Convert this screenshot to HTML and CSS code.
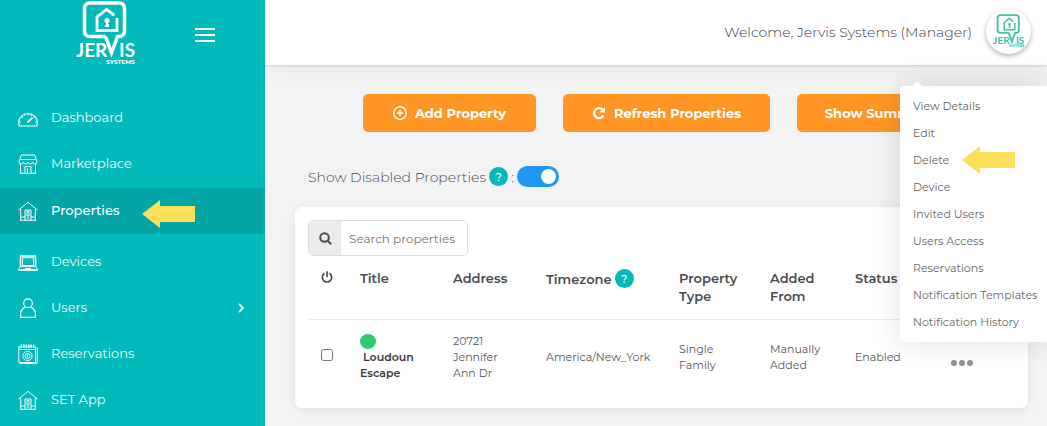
FILE: index.html
```html
<!DOCTYPE html>
<html lang="en">
<head>
<meta charset="utf-8">
<meta name="viewport" content="width=device-width, initial-scale=1">
<title>Properties</title>
<link rel="stylesheet" href="styles.css">
</head>
<body>
<svg class="defs" aria-hidden="true">
  <symbol id="logo-mark" viewBox="0 0 60 66">
    <path d="M29.500 35.500H14Q8.500 35.500 8.500 29.500V8Q8.500 2 14 2H43Q48.500 2 48.500 8V29.500Q48.500 35.500 43 35.500H41.500L35.500 52 29.500 35.500" fill="none" stroke="currentColor" stroke-width="3.500"/>
    <path d="M37 15V13L30.500 8.500 21 16V29.500H41V17" fill="none" stroke="currentColor" stroke-width="2.800"/>
    <circle cx="31" cy="19.500" r="2.500" fill="currentColor"/>
    <path d="M30 20h2v3h1v3h-4v-2h1z" fill="currentColor"/>
  </symbol>
  <symbol id="house" viewBox="0 0 20 20">
    <g fill="none" stroke="currentColor">
      <path d="M.5 9 10 1.300 19.500 9M2.700 8V19M17.300 8V19M2 19.300H18M2.500 16H7M13 16H17.500"/>
      <path d="M7 19V9H13V19M9 10.500H11V15H9ZM8.500 17H11.500"/>
    </g>
  </symbol>
</svg>
<div class="layout">
  <aside class="sidebar">
    <div class="brand">
      <a href="#" class="brand-link" aria-label="Jervis Systems"><svg class="brand-logo" viewBox="0 0 60 66"><use href="#logo-mark" width="60" height="66"/><text x="0" y="56" class="logo-word">JER</text><text x="43" y="56" class="logo-word">IS</text><text x="30" y="63" class="logo-sub">SYSTEMS</text></svg></a>
      <button class="burger" aria-label="Toggle menu"><span></span><span></span><span></span></button>
    </div>
    <nav class="nav">
      <a href="#" class="nav-item"><svg class="nav-icon" viewBox="0 0 20 20"><g fill="none" stroke="currentColor" stroke-width="1.200"><path d="M1.500 18H18.500Q19.400 16.500 19.400 14.500A9.400 9.000 0 0 0 .6 14.500Q.6 16.500 1.500 18ZM10 5.500V7.500M3.500 8.500 5 9.800M16.500 8.500 15.300 9.500M1 14H3M17 14H19M6.300 6.200 7 7.700M13.700 6.200 13 7.700"/><path d="M9.500 14.500 14.500 9.500" stroke-width="1.800"/></g></svg><span class="nav-label">Dashboard</span></a>
      <a href="#" class="nav-item"><svg class="nav-icon" viewBox="0 0 20 20"><g fill="none" stroke="currentColor"><path d="M3.500 1H16.500L19 7.500Q19 10 16.800 10 15 10 14.500 8 14 10 12.200 10 10.500 10 10 8 9.500 10 7.800 10 6 10 5.500 8 5 10 3.200 10 1 10 1 7.500ZM2.500 5.500H17.500M2.500 10V19M17.500 10V19M2 19.300H18M7 19V12.500H13V19M9.500 19V14.500"/></g></svg><span class="nav-label">Marketplace</span></a>
      <a href="#" class="nav-item nav-item-active" aria-current="page"><svg class="nav-icon"><use href="#house"/></svg><span class="nav-label">Properties</span><svg class="pointer nav-pointer" viewBox="0 0 53 28" aria-hidden="true"><path d="M0 14 18 0V6H53V22H18V28Z"/></svg></a>
      <a href="#" class="nav-item"><svg class="nav-icon" viewBox="0 0 20 20"><g fill="none" stroke="currentColor"><path d="M2.500 14.500V4H17.500V14.500" stroke-width="1.600"/><path d="M4.500 13V5.700H15.500V13.500H4.500M2.500 14.500 .6 17V18.500H19.400V17L17.500 14.500ZM7 16.500H13M.6 17.500H19"/></g></svg><span class="nav-label">Devices</span></a>
      <a href="#" class="nav-item"><svg class="nav-icon" viewBox="0 0 20 20"><g fill="none" stroke="currentColor" stroke-width="1.300"><circle cx="10" cy="5.200" r="4.400"/><path d="M7.500 9.200Q2.600 11 2.600 16.500V19.300H17.400V16.500Q17.400 11 12.500 9.200"/></g></svg><span class="nav-label">Users</span><svg class="chevron" viewBox="0 0 6 10"><path d="M1 1 5 5 1 9" fill="none" stroke="currentColor" stroke-width="1.800"/></svg></a>
      <a href="#" class="nav-item"><svg class="nav-icon" viewBox="0 0 20 20"><g fill="none" stroke="currentColor"><path d="M.8 3H17.500V18.500H.8ZM19.200 3.500V19.400H1.500M1 5.500H17.500"/><path d="M2.500 2H17.500" stroke-width="3" stroke-dasharray="1.500 1"/><circle cx="9.500" cy="12" r="4.600"/><circle cx="9.500" cy="12" r="2.500"/><path d="M9.500 10V13.500"/></g></svg><span class="nav-label">Reservations</span></a>
      <a href="#" class="nav-item"><svg class="nav-icon"><use href="#house"/></svg><span class="nav-label">SET App</span></a>
    </nav>
  </aside>
  <div class="page">
    <header class="topbar">
      <span class="welcome">Welcome, Jervis Systems (Manager)</span>
      <button class="avatar" aria-label="Account"><svg class="avatar-logo" viewBox="0 0 60 66"><use href="#logo-mark" width="60" height="66"/><text x="0" y="56" class="logo-word">JER</text><text x="43" y="56" class="logo-word">IS</text><text x="30" y="63" class="logo-sub">SYSTEMS</text></svg></button>
    </header>
    <main class="content">
      <div class="actions">
        <button class="btn btn-add"><svg class="btn-icon" viewBox="0 0 14 14"><g fill="none" stroke="currentColor" stroke-width="1.400"><circle cx="7" cy="7" r="6.200"/><path d="M7 4V10M4 7H10"/></g></svg>Add Property</button>
        <button class="btn btn-refresh"><svg class="btn-icon" viewBox="0 0 14 14"><path d="M11.300 4.500A5 5 0 1 0 11.500 9.500" fill="none" stroke="currentColor" stroke-width="2.200"/><path d="M13 1V6.500H7.500Z" fill="currentColor"/></svg>Refresh Properties</button>
        <button class="btn btn-summary">Show Summary</button>
      </div>
      <div class="filter">
        <label for="disabled">Show Disabled Properties</label>
        <button class="help" aria-label="Help">?</button>
        <span>:</span>
        <input class="switch" id="disabled" type="checkbox" role="switch" checked>
      </div>
      <section class="card">
        <div class="search">
          <label class="search-label" for="search" aria-label="Search"><svg class="search-icon" viewBox="0 0 13 13"><g fill="none" stroke="currentColor" stroke-width="2"><circle cx="5.500" cy="5.500" r="4.300"/><path d="M8.600 8.600 12.200 12.200"/></g></svg></label>
          <input class="search-input" id="search" type="text" placeholder="Search properties">
        </div>
        <table class="table">
          <colgroup><col class="col-check"><col class="col-text"><col class="col-text"><col class="col-zone"><col class="col-type"><col class="col-from"><col class="col-status"><col></colgroup>
          <thead>
            <tr>
              <th class="check-cell"><svg class="power" viewBox="0 0 12 12" role="img" aria-label="Power"><path d="M3.500 2.300A4.700 4.700 0 1 0 8.500 2.300M6 .3V6" fill="none" stroke="currentColor" stroke-width="1.700"/></svg></th>
              <th>Title</th><th>Address</th><th><span class="with-help">Timezone <button class="help" aria-label="Timezone help">?</button></span></th><th>Property Type</th><th>Added From</th><th>Status</th><th></th>
            </tr>
          </thead>
          <tbody>
            <tr>
              <td class="check-cell"><input class="row-check" type="checkbox" aria-label="Select Loudoun Escape"></td>
              <td class="title-cell"><span class="dot"></span>&nbsp;Loudoun Escape</td>
              <td>20721<br>Jennifer<br>Ann Dr</td>
              <td>America/New_York</td>
              <td>Single<br>Family</td>
              <td>Manually<br>Added</td>
              <td>Enabled</td>
              <td class="more-cell"><button class="more" aria-label="More actions"><span></span><span></span><span></span></button></td>
            </tr>
          </tbody>
        </table>
      </section>
    </main>
    <div class="menu">
      <a href="#">View Details</a>
      <a href="#">Edit</a>
      <a href="#">Delete<svg class="pointer menu-pointer" viewBox="0 0 53 28" aria-hidden="true"><path d="M0 14 18 0V6H53V22H18V28Z"/></svg></a>
      <a href="#">Device</a>
      <a href="#">Invited Users</a>
      <a href="#">Users Access</a>
      <a href="#">Reservations</a>
      <a href="#">Notification Templates</a>
      <a href="#">Notification History</a>
    </div>
  </div>
</div>
</body>
</html>
```

FILE: styles.css
```css
* { box-sizing: border-box; }
body {
  margin: 0;
  font-family: Montserrat, Inter, "Open Sans", sans-serif;
  font-size: 14px;
  color: #4a4b50;
  background: #f3f3f3;
}
a { color: inherit; text-decoration: none; }
button, input { font: inherit; color: inherit; }
button { border: 0; padding: 0; background: none; cursor: pointer; }
.defs { position: absolute; width: 0; height: 0; }

.layout { display: grid; grid-template-columns: 265px 1fr; min-height: 100vh; }

.sidebar { background: #02b9bb; color: #fff; }
.brand { display: flex; align-items: flex-start; height: 95px; padding: 1px 50px 0 76px; }
.brand-link { display: block; }
.brand-logo { display: block; width: 60px; height: 66px; overflow: visible; }
.burger { display: grid; gap: 4px; width: 20px; margin: 27px 0 0 auto; }
.burger span { height: 2px; background: #fff; }
.logo-word { font: 700 19px Lato, sans-serif; fill: currentColor; }
.logo-sub { font: 700 6px Montserrat, Lato, sans-serif; fill: currentColor; }

.nav-item {
  position: relative;
  display: flex;
  align-items: center;
  gap: 13px;
  height: 46px;
  padding: 0 21px 0 18px;
  color: #f0fbfb;
  font-size: 13px;
}
.nav-item-active { margin: 1px 0 5px; background: #04a5a7; color: #fff; font-weight: 500; }
.nav-icon { width: 20px; height: 20px; }
.nav-label { padding-bottom: 2px; }
.chevron { width: 6px; height: 10px; margin-left: auto; }
.pointer { position: absolute; width: 53px; height: 28px; fill: #ffde59; }
.nav-pointer { left: 142px; top: 12px; }

.page { position: relative; min-width: 0; overflow: hidden; }
.topbar {
  position: relative;
  display: flex;
  align-items: center;
  justify-content: flex-end;
  gap: 14px;
  height: 65px;
  padding: 0 16px 2px;
  background: #fff;
  box-shadow: 0 0 3px rgba(0, 0, 0, .25), 0 0 30px rgba(0, 0, 0, .05);
}
.welcome { font-size: 14px; font-weight: 300; color: #3a3b40; }
.avatar {
  display: grid;
  place-items: center;
  width: 45px;
  height: 45px;
  border-radius: 50%;
  background: #fff;
  color: #3fc1ad;
  box-shadow: 0 2px 5px rgba(0, 0, 0, .3);
}
.avatar-logo { width: 32px; height: 35px; overflow: visible; }

.content { padding: 29px 19px 18px 30px; }
.actions { display: flex; justify-content: center; align-items: center; gap: 27px; }
.btn {
  display: flex;
  align-items: center;
  justify-content: center;
  gap: 8px;
  height: 38px;
  border-radius: 5px;
  background: #ff9626;
  color: #fff;
  font-size: 13px;
  font-weight: 700;
  white-space: nowrap;
}
.btn-icon { width: 14px; height: 14px; }
.btn-add { min-width: 173px; }
.btn-refresh { min-width: 207px; }
.btn-summary { min-width: 163px; }

.filter {
  display: flex;
  align-items: center;
  gap: 3px;
  margin: 34px 0 20px 13px;
  font-weight: 300;
}
.help {
  display: inline-grid;
  place-items: center;
  width: 19px;
  height: 19px;
  border-radius: 50%;
  background: #02b9bb;
  color: #fff;
  font-size: 11px;
  font-weight: 500;
}
.switch {
  appearance: none;
  width: 42px;
  height: 21px;
  margin: 0;
  padding: 3px;
  border-radius: 11px;
  background: #2196f3;
}
.switch::before { content: ""; display: block; width: 15px; height: 15px; border-radius: 50%; background: #fff; }
.switch:checked::before { margin-left: auto; }

.card { padding: 13px; border-radius: 7px; background: #fff; box-shadow: 0 2px 10px rgba(0, 0, 0, .08); }
.search { display: flex; width: 160px; height: 36px; border: 1px solid #dcdcdc; border-radius: 5px; overflow: hidden; }
.search-label { display: grid; place-items: center; width: 32px; background: #ececec; }
.search-icon { width: 13px; height: 13px; }
.search-input { flex: 1; min-width: 0; padding: 0 0 0 8px; border: 0; font-size: 12px; background: #fff; }
.search-input::placeholder { color: #757575; }

.table { width: 100%; table-layout: fixed; border-collapse: collapse; margin-top: 6px; font-size: 11px; }
.col-check { width: 52px; }
.col-text { width: 93px; }
.col-zone { width: 133px; }
.col-type { width: 91px; }
.col-from { width: 85px; }
.col-status { width: 88px; }
.table th {
  height: 57px;
  padding: 7px 16px 12px 0;
  border-bottom: 1px solid #ebebeb;
  text-align: left;
  vertical-align: top;
  font-size: 13px;
  line-height: 18px;
  font-weight: 600;
}
.table td { height: 76px; padding: 0; line-height: 16px; color: #55565a; }
.table .check-cell { padding-left: 13px; }
.power { display: block; width: 12px; height: 12px; margin-top: 2px; }
.with-help { display: flex; align-items: center; gap: 3px; margin-right: -16px; }
.row-check { display: block; width: 12px; height: 12px; margin: 0 0 4px; }
.table .title-cell { padding-right: 24px; color: #3a3b40; font-weight: 600; }
.dot { display: block; width: 16px; height: 15px; border-radius: 50%; background: #2ecc71; }
.more { display: flex; gap: 2px; margin: 11px 0 0 8px; }
.more span { width: 6px; height: 6px; border-radius: 50%; background: #929292; }

.menu {
  position: absolute;
  top: 86px;
  right: 0;
  width: 147px;
  padding: 7px 0 6px 13px;
  border-radius: 4px 0 0 4px;
  background: #fff;
  box-shadow: 0 0 30px rgba(0, 0, 0, .13);
}
.menu::before {
  content: "";
  position: absolute;
  top: -5px;
  left: 11px;
  border: 6px solid transparent;
  border-top: 0;
  border-bottom-color: #fff;
}
.menu a { position: relative; display: block; line-height: 27px; font-size: 11px; color: #666; white-space: nowrap; }
.menu-pointer { left: 49px; top: -1px; }
```
